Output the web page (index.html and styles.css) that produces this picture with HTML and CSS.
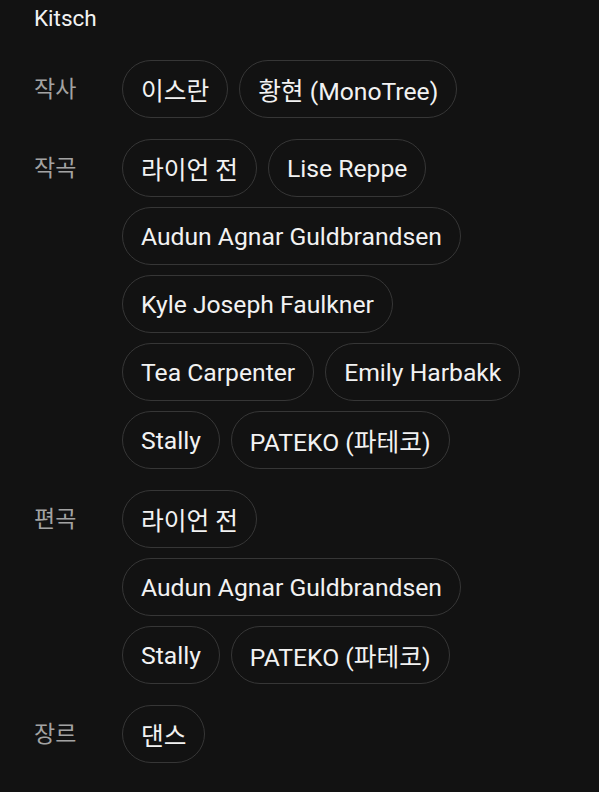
FILE: index.html
```html
<!DOCTYPE html>
<html lang="ko">
<head>
<meta charset="UTF-8" />
<meta name="viewport" content="width=device-width, initial-scale=1" />
<title>Kitsch - 크레딧</title>
<link rel="stylesheet" href="styles.css">
</head>
<body>

<div class="credits">

  <h1 class="song-title">Kitsch</h1>

  <!-- 작사 -->
  <div class="credit-group">
    <div class="credit-label">작사</div>
    <div class="chip-list">
      <span class="chip">이스란</span>
      <span class="chip">황현 (MonoTree)</span>
    </div>
  </div>

  <!-- 작곡 -->
  <div class="credit-group">
    <div class="credit-label">작곡</div>
    <div class="chip-list">
      <span class="chip">라이언 전</span>
      <span class="chip">Lise Reppe</span>
      <span class="chip">Audun Agnar Guldbrandsen</span>
      <span class="chip">Kyle Joseph Faulkner</span>
      <span class="chip">Tea Carpenter</span>
      <span class="chip">Emily Harbakk</span>
      <span class="chip">Stally</span>
      <span class="chip">PATEKO (파테코)</span>
    </div>
  </div>

  <!-- 편곡 -->
  <div class="credit-group">
    <div class="credit-label">편곡</div>
    <div class="chip-list">
      <span class="chip">라이언 전</span>
      <span class="chip">Audun Agnar Guldbrandsen</span>
      <span class="chip">Stally</span>
      <span class="chip">PATEKO (파테코)</span>
    </div>
  </div>

  <!-- 장르 -->
  <div class="credit-group">
    <div class="credit-label">장르</div>
    <div class="chip-list">
      <span class="chip">댄스</span>
    </div>
  </div>

</div>

</body>
</html>
```

FILE: styles.css
```css
body {
  margin: 0;
  background-color: #121212;
  font-family: Roboto, "Noto Sans CJK KR", sans-serif;
  color: #ececec;
}

.credits {
  padding: 4px 40px 20px 34px;
}

.song-title {
  margin: 0 0 28px 0;
  font-size: 22.5px;
  font-weight: normal;
  line-height: 28px;
  color: #f2f2f2;
}

.credit-group {
  display: flex;
  align-items: flex-start;
  margin-bottom: 21px;
}

.credit-label {
  flex: 0 0 88px;
  padding-top: 2px;
  font-size: 23px;
  line-height: 56px;
  color: #a3a3a3;
}

.chip-list {
  display: flex;
  flex-wrap: wrap;
  gap: 10px 11px;
  flex: 1;
}

.chip {
  display: inline-flex;
  align-items: center;
  height: 58px;
  box-sizing: border-box;
  padding: 0 18px;
  border: 1px solid #363636;
  border-radius: 29px;
  font-size: 24.7px;
  color: #f2f2f2;
  white-space: nowrap;
}
```
